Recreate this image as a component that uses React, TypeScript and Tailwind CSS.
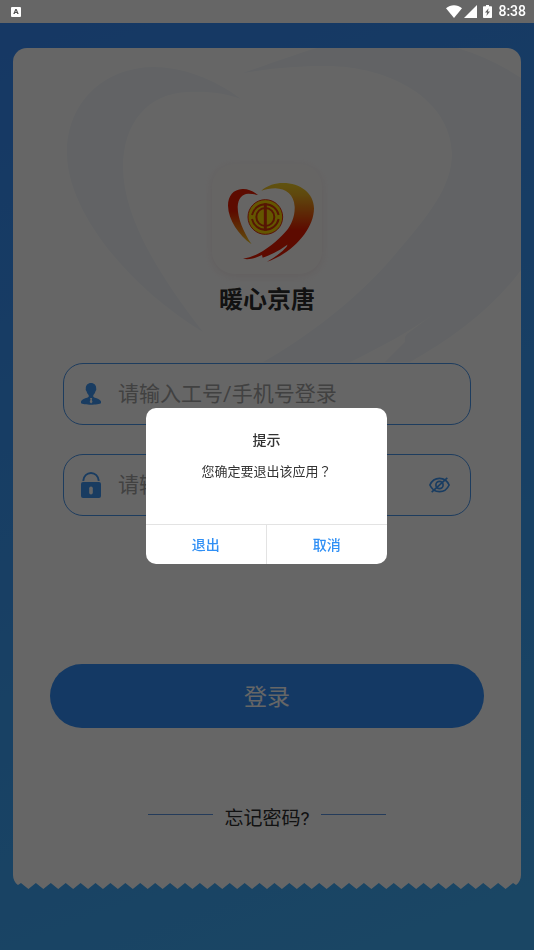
import { useState } from 'react';

const TEETH = 33;
const TOOTH = 15;
const EDGE_W = TEETH * TOOTH + 16;

// zigzag bottom of the card, drawn right to left
const zigzag = Array.from({ length: TEETH }, (_, i) => {
  const x = EDGE_W - 8 - i * TOOTH;
  return `L${x} 8 L${x - TOOTH / 2} 14`;
}).join(' ');
const EDGE_PATH = `M0 0 H${EDGE_W} C${EDGE_W} 4 ${EDGE_W - 2} 8 ${EDGE_W - 5} 10 ${zigzag} L8 8 L5 10 C2 8 0 4 0 0 Z`;

function StatusBar() {
  return (
    <header className="relative z-20 flex h-[23px] items-center justify-between pl-[11px] pr-2 font-['Roboto',sans-serif] text-white">
      <span className="flex size-[10px] items-center justify-center rounded-[1px] bg-white text-[8px] font-black leading-none text-[#555]">
        A
      </span>
      <div className="flex items-center">
        <svg width={16} height={13} viewBox="0 0 16 13" fill="currentColor">
          <path d="M0 3.2C4.6-.9 11.4-.9 16 3.2L8 13z" />
        </svg>
        <svg width={13} height={13} viewBox="0 0 13 13" fill="currentColor" className="ml-[2px]">
          <path d="M13 0v13H0z" />
        </svg>
        <svg width={9} height={13} viewBox="0 0 9 13" className="ml-[6px]">
          <path d="M3 0h3v1.300h2.200q.8 0 .8.8v10.100q0 .8-.8.8H.8q-.8 0-.8-.8V2.100q0-.8.8-.8H3z" fill="#fff" />
          <path d="M5.600 3.300 2 7.600h2.100L3.400 11 7 6.600H4.900z" fill="#666" />
        </svg>
        <span className="ml-[6px] text-[14px] font-medium leading-[23px]">8:38</span>
      </div>
    </header>
  );
}

function HeartWatermark() {
  return (
    <svg viewBox="0 0 508 314" className="absolute inset-x-0 top-0 w-full" fill="#f4f8fc">
      <path d="M228 51C200 30 168 19 140 19C90 20 54 55 54 105C54 160 110 235 190 284C140 220 110 165 110 119C110 75 135 45 175 44C195 43 212 45 228 51Z" />
      <path d="M230 25C262 14 283 6 304 0H444Q478 10 508 30V222C480 260 440 290 397 314H372L392 294Q391 289 394 286L422 265C396 284 366 300 337 314H250C295 289 345 250 380 209C415 168 439 140 439 105C437 50 375 17 310 18C287 18 258 20 230 25Z" />
    </svg>
  );
}

function Logo() {
  return (
    <div className="size-[110px] rounded-[23px] bg-[#fffdfb] shadow-[0_2px_10px_rgba(200,120,120,0.14)]">
      <svg viewBox="0 0 330 330" className="size-full">
        <defs>
          <linearGradient id="heart-left" x1="0" y1="0" x2="0" y2="1">
            <stop offset="0.4" stopColor="#e81c00" />
            <stop offset="1" stopColor="#f2c81e" />
          </linearGradient>
          <linearGradient id="heart-right" x1="0" y1="0" x2="0" y2="1">
            <stop offset="0" stopColor="#f0cf28" />
            <stop offset="0.15" stopColor="#eeb422" />
            <stop offset="0.6" stopColor="#e81c00" />
          </linearGradient>
        </defs>
        <path d="M138 93C122 80 107 74 91 75C64 76 48 96 48 125C49 168 80 213 119 241C94 203 77 163 77 128C78 103 92 88 110 89C120 89 130 91 138 93Z" fill="url(#heart-left)" />
        <path d="M148 80C166 64 190 57 213 57C265 57 306 88 306 133C306 196 242 268 165 293Q205 271 224 248L228 238L242 230C214 252 184 271 152 281L150 273C130 283 110 288 93 284C141 278 190 238 222 202C239 182 249 155 248 128C246 92 222 74 190 73C175 73 160 76 148 80Z" fill="url(#heart-right)" />
        <circle cx="160" cy="159" r="52" fill="#f9d800" stroke="#e02a10" strokeWidth="3" />
        <g fill="none" stroke="#d8380a" strokeWidth="6">
          <path d="M120 153A41 41 0 0 1 200 153M120 165A41 41 0 0 0 200 165" />
          <circle cx="160" cy="159" r="27" />
          <path d="M160 118V200" strokeWidth="9" />
        </g>
      </svg>
    </div>
  );
}

function UserIcon() {
  return (
    <svg width={20} height={22} viewBox="0 0 20 22" className="shrink-0">
      <path d="M10 0C13.300 0 15.400 2.300 15.200 5.600C15.500 6.600 15.200 7.700 14.600 8.100C14.100 10 13.200 11.300 12.300 12.200V13.800C13.500 15.300 19 15.500 20 18.500V20C19.500 21.200 14 21.700 10 21.700S.5 21.200 0 20V18.500C1 15.500 6.500 15.300 7.700 13.800V12.200C6.800 11.300 5.900 10 5.400 8.100C4.800 7.700 4.500 6.600 4.800 5.600C4.600 2.300 6.700 0 10 0Z" fill="#3f97f2" />
      <path d="M9 15h2.200l-.4 1.400.7 2.600-1.400 1.500L8.700 19l.8-2.600z" fill="#fff" />
    </svg>
  );
}

function LockIcon() {
  return (
    <svg width={20} height={26} viewBox="0 0 20 26" className="shrink-0">
      <path d="M2.200 8.800C2.800 4.400 5.800 1.100 10 1.100S17.200 4.400 17.800 8.800" fill="none" stroke="#3f97f2" strokeWidth="2" />
      <rect y="10" width="20" height="16" rx="2" fill="#3f97f2" />
      <rect x="8.200" y="14.500" width="3.600" height="8" rx="1.800" fill="#fff" />
    </svg>
  );
}

function EyeOffIcon() {
  return (
    <svg width={21} height={16} viewBox="0 0 21 16" fill="none" stroke="#3f97f2" strokeWidth="1.700">
      <path d="M.9 8C3 3.200 6.500 1.300 10.500 1.300S18 3.200 20.100 8C18 12.800 14.500 14.700 10.500 14.700S3 12.800.9 8Z" />
      <circle cx="10.500" cy="8" r="3.600" />
      <path d="M18.300.8 2.700 15.200" />
    </svg>
  );
}

const FIELD = 'flex h-[62px] items-center rounded-[20px] border border-[#4a96ec] pl-[17px]';
const FIELD_INPUT =
  'ml-[17px] min-w-0 flex-1 bg-transparent text-[21px] leading-[30px] text-[#333] outline-none placeholder:text-[#a3a3a3]';

function LoginForm() {
  const [account, setAccount] = useState('');
  const [password, setPassword] = useState('');
  const [visible, setVisible] = useState(false);

  return (
    <form className="relative mt-12" onSubmit={e => e.preventDefault()}>
      <div className="flex flex-col gap-[29px] px-[50px]">
        <label className={FIELD}>
          <UserIcon />
          <input className={FIELD_INPUT} aria-label="工号/手机号" placeholder="请输入工号/手机号登录"
            value={account} onChange={e => setAccount(e.target.value)} />
        </label>
        <div className={FIELD}>
          <LockIcon />
          <input className={FIELD_INPUT} aria-label="密码" placeholder="请输入密码" type={visible ? 'text' : 'password'}
            value={password} onChange={e => setPassword(e.target.value)} />
          <button type="button" aria-label="显示密码" className="mr-5" onClick={() => setVisible(v => !v)}>
            <EyeOffIcon />
          </button>
        </div>
      </div>
      <div className="mt-[148px] px-[37px]">
        <button type="submit" className="h-16 w-full rounded-full bg-[#328ffa] pt-1 text-[23px] text-white">
          登录
        </button>
      </div>
    </form>
  );
}

function ExitDialog({ onClose }: { onClose: () => void }) {
  return (
    <div role="dialog" aria-modal="true" aria-labelledby="exit-title"
      className="w-[241px] overflow-hidden rounded-[10px] bg-white text-center">
      <div className="h-[116px] pt-[22px]">
        <h2 id="exit-title" className="text-[14px] font-medium leading-5 text-[#333]">提示</h2>
        <p className="mt-[11px] text-[13px] leading-5 text-[#333]">
          您确定要退出该应用<span className="font-['Noto_Sans_CJK_TC',sans-serif]" lang="zh-TW">？</span>
        </p>
      </div>
      <div className="grid h-10 grid-cols-2 border-t border-[#e3e3e3] text-[14px] font-medium text-[#2f8ff5]">
        <button type="button" className="border-r border-[#e3e3e3] pt-px" onClick={onClose}>退出</button>
        <button type="button" className="pt-px" onClick={onClose}>取消</button>
      </div>
    </div>
  );
}

export default function App() {
  const [dialogOpen, setDialogOpen] = useState(true);

  return (
    <div className="relative flex min-h-screen flex-col bg-white font-['Roboto','Noto_Sans_CJK_SC',sans-serif]">
      <StatusBar />
      <main className="flex-1 bg-linear-160 from-[#388cfa] to-[#42b0fa] px-[13px] pb-[61px] pt-[25px]">
        <section className="relative flex flex-col overflow-hidden rounded-t-[14px] bg-white pt-[116px]">
          <HeartWatermark />
          <div className="relative flex flex-col items-center">
            <Logo />
            <h1 className="mt-[11px] text-[24px] font-bold leading-[30px] text-[#2e2e2e]">暖心京唐</h1>
          </div>
          <LoginForm />
          <div className="mb-[41px] mt-[76px] flex items-center justify-center gap-3">
            <span className="mb-[9px] h-px w-[65px] bg-[#5a94e0]" />
            <a href="#forgot" className="text-[19px] leading-[30px] text-[#2e2e2e]">忘记密码?</a>
            <span className="mb-[9px] h-px w-[65px] bg-[#5a94e0]" />
          </div>
        </section>
        <svg viewBox={`0 0 ${EDGE_W} 14`} preserveAspectRatio="none" className="block h-[14px] w-full">
          <path d={EDGE_PATH} fill="#fff" />
        </svg>
      </main>
      {dialogOpen && (
        <div className="fixed inset-0 z-10 flex items-center justify-center bg-black/60 pr-px pt-[22px]">
          <ExitDialog onClose={() => setDialogOpen(false)} />
        </div>
      )}
    </div>
  );
}
